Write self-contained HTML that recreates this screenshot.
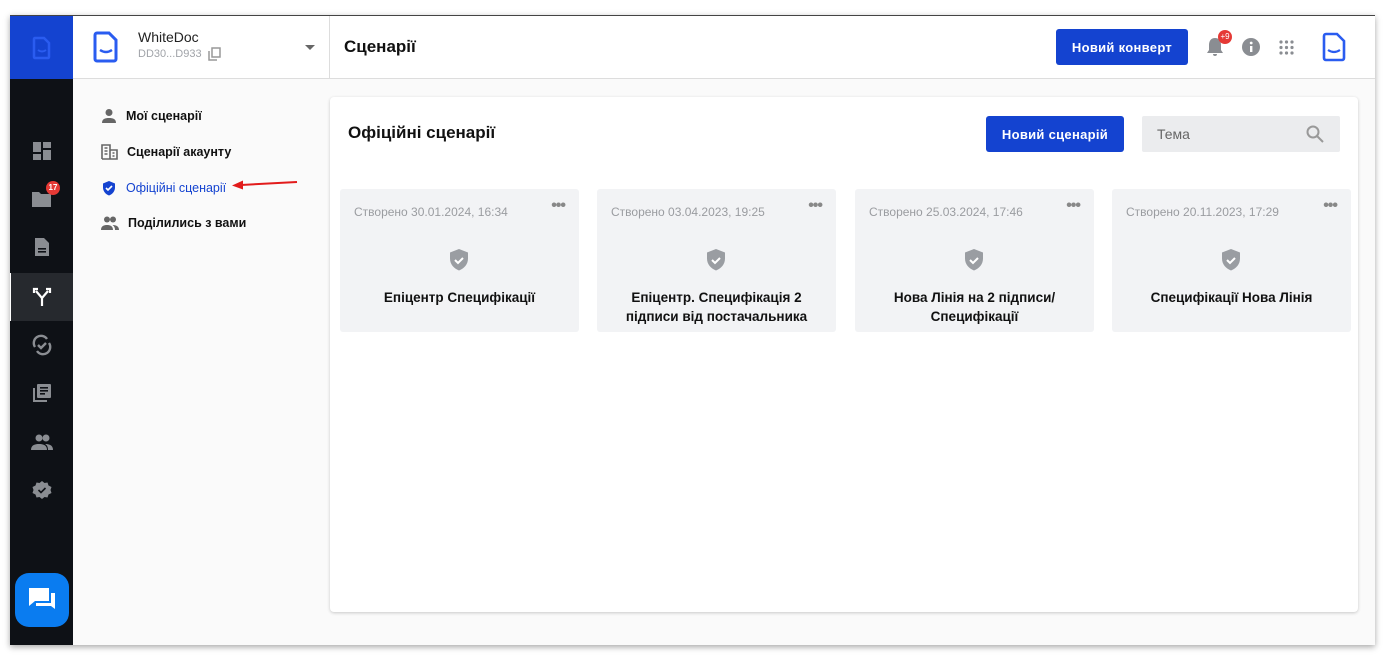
<!DOCTYPE html>
<html><head><meta charset="utf-8"><style>
*{box-sizing:border-box;margin:0;padding:0}
body{width:1390px;height:658px;background:#fff;font-family:"Liberation Sans",Arial,sans-serif;position:relative;overflow:hidden}
.frame{position:absolute;left:10px;top:15px;width:1365px;height:630px;background:#fafafa;border-top:1px solid #444;box-shadow:0 2px 6px rgba(0,0,0,.35);overflow:hidden}
.side{position:absolute;left:0;top:0;width:63px;height:630px;background:#0e1116}
.side .logo{height:63px;background:#1443d0;display:flex;align-items:center;justify-content:center}
.ic{position:absolute;left:0;width:63px;height:48px;display:flex;align-items:center;justify-content:center}
.hdr{position:absolute;left:63px;top:0;right:0;height:63px;background:#fff;border-bottom:1px solid #ddd}
.nav{position:absolute;left:63px;top:64px;width:257px;bottom:0}
.nav div{position:absolute;left:28px;display:flex;align-items:center;font-size:12.5px;font-weight:bold;color:#111}
.nav svg{margin-right:9px}
.panel{position:absolute;left:320px;top:81px;width:1028px;height:515px;background:#fff;border-radius:4px;box-shadow:0 1px 3px rgba(0,0,0,.2)}
.btn{position:absolute;background:#1443d0;color:#fff;font-weight:bold;font-size:13px;border-radius:3px;display:flex;align-items:center;justify-content:center;letter-spacing:.3px}
.card{position:absolute;top:92px;width:239px;height:143px;background:#f2f3f5;border-radius:3px;text-align:center}
.card .d{position:absolute;left:14px;top:16px;font-size:12px;color:#9a9ca0}
.card .m{position:absolute;right:14px;top:8px;font-size:16px;color:#888;letter-spacing:-1px;font-weight:bold}
.card svg{position:absolute;left:108px;top:59px}
.card .t{position:absolute;left:10px;right:10px;top:99px;font-size:13.5px;font-weight:bold;color:#111;line-height:19px}
</style></head><body>
<div class="frame">
 <div class="side">
  <div class="logo"><svg width="20" height="24" viewBox="0 0 20 24"><path d="M3 2h9l5 5v14a1 1 0 0 1-1 1H3a1 1 0 0 1-1-1V3a1 1 0 0 1 1-1z" fill="none" stroke="#2a5cf0" stroke-width="2.5"/><path d="M6 14q4 3 8 0" fill="none" stroke="#2a5cf0" stroke-width="2"/></svg></div>
  <div class="ic" style="top:111px"><svg width="20" height="20" viewBox="0 0 20 20" fill="#8a8d92"><rect x="1" y="1" width="8" height="10"/><rect x="11" y="1" width="8" height="6"/><rect x="1" y="13" width="8" height="6"/><rect x="11" y="9" width="8" height="10"/></svg></div>
  <div class="ic" style="top:159px"><svg width="22" height="20" viewBox="0 0 22 20" fill="#8a8d92"><path d="M1 3h7l2 2h10v13H1z"/></svg><span style="position:absolute;left:36px;top:6px;background:#e53935;color:#fff;font-size:8px;font-weight:bold;border-radius:7px;width:14px;height:14px;text-align:center;line-height:14px">17</span></div>
  <div class="ic" style="top:207px"><svg width="16" height="20" viewBox="0 0 16 20" fill="#8a8d92"><path d="M1 1h9l5 5v13H1z"/><rect x="4" y="11" width="8" height="1.6" fill="#0e1116"/><rect x="4" y="14" width="8" height="1.6" fill="#0e1116"/></svg></div>
  <div class="ic" style="top:257px;background:#26292e;border-left:1px solid #fff"><svg width="20" height="20" viewBox="0 0 20 20" fill="none" stroke="#fff" stroke-width="2.2"><path d="M10 19v-8L4 4M10 11l6-7M2 6V2h4M18 6V2h-4"/></svg></div>
  <div class="ic" style="top:305px"><svg width="22" height="22" viewBox="0 0 22 22" fill="none" stroke="#8a8d92" stroke-width="2.4"><path d="M4 13a7 7 0 0 1 12-8M18 9a7 7 0 0 1-12 8"/><path d="M7 11l3 3 5-5"/></svg></div>
  <div class="ic" style="top:353px"><svg width="20" height="20" viewBox="0 0 20 20" fill="#8a8d92"><path d="M1 5h2v12h12v2H1z"/><rect x="5" y="1" width="14" height="14" rx="1"/><rect x="8" y="4" width="8" height="1.6" fill="#0e1116"/><rect x="8" y="7" width="8" height="1.6" fill="#0e1116"/><rect x="8" y="10" width="5" height="1.6" fill="#0e1116"/></svg></div>
  <div class="ic" style="top:402px"><svg width="22" height="16" viewBox="0 0 22 16" fill="#8a8d92"><circle cx="8" cy="4" r="3.5"/><circle cx="15" cy="4" r="3.5"/><path d="M0 16c0-5 4-6 8-6s8 1 8 6zM14 10c4 0 8 1 8 6h-5c0-3-1-5-3-6z"/></svg></div>
  <div class="ic" style="top:450px"><svg width="20" height="20" viewBox="0 0 20 20"><path d="M10 1l2.5 2 3-.5 1 3 3 1.5-1 3 1 3-3 1.5-1 3-3-.5L10 19l-2.5-2-3 .5-1-3-3-1.5 1-3-1-3 3-1.5 1-3 3 .5z" fill="#8a8d92"/><path d="M6.5 10l2.5 2.5 4.5-4.5" stroke="#0e1116" stroke-width="1.6" fill="none"/></svg></div>
  <div style="position:absolute;left:5px;top:557px;width:54px;height:54px;background:#0a7cf0;border-radius:14px;display:flex;align-items:center;justify-content:center"><svg width="28" height="26" viewBox="0 0 28 26" fill="#fff"><path d="M1 1h20v13H7l-6 5z"/><path d="M23 6h4v16l-4-3H8v-3h15z"/></svg></div>
 </div>
 <div class="hdr">
  <svg style="position:absolute;left:20px;top:15px" width="26" height="32" viewBox="0 0 26 32"><path d="M4 2h12l7 7v19a2 2 0 0 1-2 2H4a2 2 0 0 1-2-2V4a2 2 0 0 1 2-2z" fill="none" stroke="#2a5cf0" stroke-width="3"/><path d="M7 19q6 4 12 0" fill="none" stroke="#2a5cf0" stroke-width="2.4"/></svg>
  <div style="position:absolute;left:65px;top:13px;font-size:14px;color:#222">WhiteDoc</div>
  <div style="position:absolute;left:65px;top:32px;font-size:11px;color:#a0a3a8">DD30...D933</div>
  <svg style="position:absolute;left:135px;top:31px" width="13" height="14" viewBox="0 0 13 14" fill="none" stroke="#999" stroke-width="1.5"><rect x="4" y="1" width="8" height="9"/><path d="M1 4v9h8"/></svg>
  <div style="position:absolute;left:232px;top:29px;border:5px solid transparent;border-top:5px solid #666"></div>
  <div style="position:absolute;left:256px;top:0;width:1px;height:63px;background:#ddd"></div>
  <div style="position:absolute;left:271px;top:21px;font-size:17px;font-weight:bold;color:#111">Сценарії</div>
  <div class="btn" style="left:983px;top:13px;width:132px;height:36px">Новий конверт</div>
  <svg style="position:absolute;left:1133px;top:21px" width="18" height="20" viewBox="0 0 18 20" fill="#8a8d92"><path d="M9 1c4 0 6 3 6 7v5l2 3H1l2-3V8c0-4 2-7 6-7zM7 17h4a2 2 0 0 1-4 0z"/></svg>
  <span style="position:absolute;left:1145px;top:14px;background:#e53935;color:#fff;font-size:8px;border-radius:7px;width:14px;height:14px;text-align:center;line-height:14px">+9</span>
  <svg style="position:absolute;left:1169px;top:22px" width="18" height="18" viewBox="0 0 18 18"><circle cx="9" cy="9" r="9" fill="#8a8d92"/><rect x="8" y="8" width="2.4" height="6" fill="#fff"/><circle cx="9.2" cy="5" r="1.4" fill="#fff"/></svg>
  <svg style="position:absolute;left:1206px;top:24px" width="15" height="15" viewBox="0 0 15 15" fill="#8a8d92"><circle cx="2" cy="2" r="1.6"/><circle cx="7.5" cy="2" r="1.6"/><circle cx="13" cy="2" r="1.6"/><circle cx="2" cy="7.5" r="1.6"/><circle cx="7.5" cy="7.5" r="1.6"/><circle cx="13" cy="7.5" r="1.6"/><circle cx="2" cy="13" r="1.6"/><circle cx="7.5" cy="13" r="1.6"/><circle cx="13" cy="13" r="1.6"/></svg>
  <svg style="position:absolute;left:1249px;top:16px" width="24" height="30" viewBox="0 0 24 30"><path d="M4 2h11l7 7v17a2 2 0 0 1-2 2H4a2 2 0 0 1-2-2V4a2 2 0 0 1 2-2z" fill="none" stroke="#2a5cf0" stroke-width="2.6"/><path d="M6 18q6 4 12 0" fill="none" stroke="#2a5cf0" stroke-width="2.2"/></svg>
 </div>
 <div class="nav">
  <div style="top:28px"><svg width="16" height="16" viewBox="0 0 16 16" fill="#666"><circle cx="8" cy="4.5" r="3.5"/><path d="M1 15c0-4 3-5 7-5s7 1 7 5z"/></svg>Мої сценарії</div>
  <div style="top:64px"><svg width="17" height="16" viewBox="0 0 17 16" fill="none" stroke="#666" stroke-width="1.6"><path d="M1 15V1h8v14M9 6h7v9H1"/><path d="M3.5 4h3M3.5 7h3M3.5 10h3M11.5 9h2M11.5 12h2"/></svg>Сценарії акаунту</div>
  <div style="top:100px;color:#1443d0;font-weight:normal"><svg width="16" height="16" viewBox="0 0 16 16"><path d="M8 1l6 2.5v4c0 4-3 7-6 8-3-1-6-4-6-8v-4z" fill="#1443d0"/><path d="M5 8l2 2 4-4" stroke="#fff" stroke-width="1.6" fill="none"/></svg>Офіційні сценарії</div>
  <div style="top:136px"><svg width="18" height="14" viewBox="0 0 18 14" fill="#666"><circle cx="6" cy="3.5" r="3"/><circle cx="12" cy="3.5" r="3"/><path d="M0 14c0-4 3-5 6-5s6 1 6 5zM11.5 9c3 0 6.5 1 6.5 5h-4c0-2.5-1-4-2.5-5z"/></svg>Поділились з вами</div>
  <svg style="position:absolute;left:158px;top:98px" width="68" height="12" viewBox="0 0 68 12"><path d="M66 4L10 7" stroke="#e21b1b" stroke-width="2"/><path d="M1 7.5l11-5v9z" fill="#e21b1b"/></svg>
 </div>
 <div class="panel">
  <div style="position:absolute;left:18px;top:26px;font-size:17px;font-weight:bold;color:#111">Офіційні сценарії</div>
  <div class="btn" style="left:656px;top:19px;width:138px;height:36px">Новий сценарій</div>
  <div style="position:absolute;left:812px;top:19px;width:198px;height:36px;background:#ebecee;border-radius:2px"><span style="position:absolute;left:15px;top:10px;font-size:14px;color:#666">Тема</span><svg style="position:absolute;left:164px;top:9px" width="18" height="18" viewBox="0 0 18 18" fill="none" stroke="#999" stroke-width="2"><circle cx="7" cy="7" r="5.5"/><path d="M11 11l6 6"/></svg></div>
  <div class="card" style="left:10px"><div class="d">Створено 30.01.2024, 16:34</div><div class="m">•••</div><svg width="22" height="24" viewBox="0 0 22 24"><path d="M11 1l9 3.5v6c0 6-4 10-9 12-5-2-9-6-9-12v-6z" fill="#9a9da2"/><path d="M7 12l3 3 5-5" stroke="#fff" stroke-width="2" fill="none"/></svg><div class="t">Епіцентр Специфікації</div></div>
  <div class="card" style="left:267px"><div class="d">Створено 03.04.2023, 19:25</div><div class="m">•••</div><svg width="22" height="24" viewBox="0 0 22 24"><path d="M11 1l9 3.5v6c0 6-4 10-9 12-5-2-9-6-9-12v-6z" fill="#9a9da2"/><path d="M7 12l3 3 5-5" stroke="#fff" stroke-width="2" fill="none"/></svg><div class="t">Епіцентр. Специфікація 2 підписи від постачальника</div></div>
  <div class="card" style="left:525px"><div class="d">Створено 25.03.2024, 17:46</div><div class="m">•••</div><svg width="22" height="24" viewBox="0 0 22 24"><path d="M11 1l9 3.5v6c0 6-4 10-9 12-5-2-9-6-9-12v-6z" fill="#9a9da2"/><path d="M7 12l3 3 5-5" stroke="#fff" stroke-width="2" fill="none"/></svg><div class="t">Нова Лінія на 2 підписи/ Специфікації</div></div>
  <div class="card" style="left:782px"><div class="d">Створено 20.11.2023, 17:29</div><div class="m">•••</div><svg width="22" height="24" viewBox="0 0 22 24"><path d="M11 1l9 3.5v6c0 6-4 10-9 12-5-2-9-6-9-12v-6z" fill="#9a9da2"/><path d="M7 12l3 3 5-5" stroke="#fff" stroke-width="2" fill="none"/></svg><div class="t">Специфікації Нова Лінія</div></div>
 </div>
</div>
</body></html>
